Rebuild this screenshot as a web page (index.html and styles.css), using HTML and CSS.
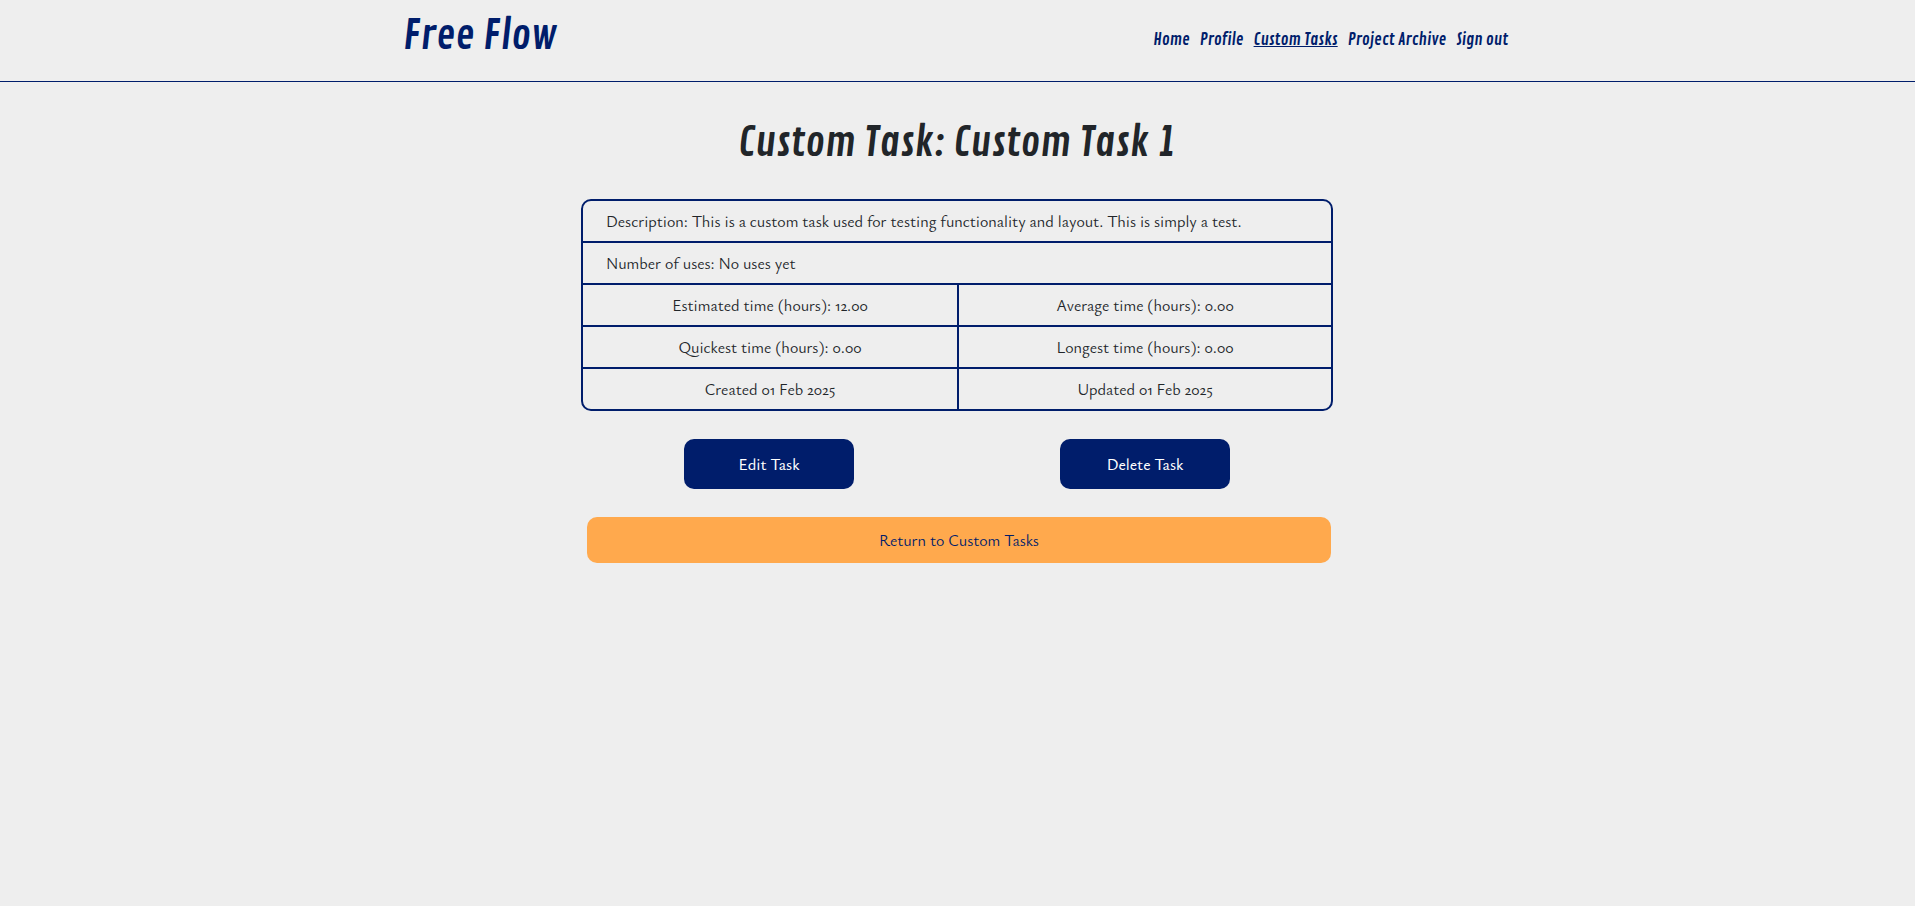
FILE: index.html
```html
<!DOCTYPE html>
<html lang="en">
<head>
<meta charset="utf-8">
<meta name="viewport" content="width=device-width, initial-scale=1">
<title>Free Flow</title>
<link rel="stylesheet" href="styles.css">
</head>
<body>
<header class="site-header">
  <div class="header-inner">
    <a class="brand" href="#">Free Flow</a>
    <nav class="main-nav">
      <a href="#">Home</a>
      <a href="#">Profile</a>
      <a class="active" href="#">Custom Tasks</a>
      <a href="#">Project Archive</a>
      <a href="#">Sign out</a>
    </nav>
  </div>
</header>
<main class="content">
  <h1 class="title">Custom Task: Custom Task 1</h1>
  <table class="details">
    <tbody>
      <tr><td class="wide" colspan="2">Description: This is a custom task used for testing functionality and layout. This is simply a test.</td></tr>
      <tr><td class="wide" colspan="2">Number of uses: No uses yet</td></tr>
      <tr><td>Estimated time (hours): 12.00</td><td>Average time (hours): 0.00</td></tr>
      <tr><td>Quickest time (hours): 0.00</td><td>Longest time (hours): 0.00</td></tr>
      <tr><td>Created 01 Feb 2025</td><td>Updated 01 Feb 2025</td></tr>
    </tbody>
  </table>
  <div class="actions">
    <button class="btn" type="button">Edit Task</button>
    <button class="btn" type="button">Delete Task</button>
  </div>
  <a class="return" href="#">Return to Custom Tasks</a>
</main>
</body>
</html>
```

FILE: styles.css
```css
* {
  box-sizing: border-box;
}

body {
  margin: 0;
  background: #eee;
  color: #212529;
  font: 16px/24px Ysabeau, Lato, sans-serif;
}

.site-header {
  border-bottom: 1px solid #001d6b;
}

.header-inner {
  display: flex;
  justify-content: space-between;
  max-width: 1109px;
  margin: 0 auto;
  padding: 12px 4px 21px 0;
}

.brand,
.main-nav,
.title {
  font-family: "Contrail One", Roboto, sans-serif;
  font-weight: 400;
}

.brand {
  color: #001d6b;
  font-size: 40px;
  line-height: 48px;
  text-decoration: none;
}

.main-nav {
  display: flex;
  gap: 10px;
  padding-top: 16px;
  font-size: 16px;
}

.main-nav a {
  color: #001d6b;
  text-decoration: none;
}

.main-nav .active {
  text-decoration: underline;
}

.content {
  max-width: 753px;
  margin: 0 auto;
  padding: 37px 1px 34px 0;
}

.title {
  margin: 0 0 32px;
  font-size: 40px;
  line-height: 48px;
  text-align: center;
}

.details {
  width: 100%;
  table-layout: fixed;
  border: 2px solid #001d6b;
  border-radius: 10px;
  border-spacing: 0;
}

.details td {
  height: 42px;
  padding: 8px 23px;
  border-bottom: 2px solid #001d6b;
  text-align: center;
}

.details td + td {
  border-left: 2px solid #001d6b;
}

.details .wide {
  text-align: left;
}

.details tr:last-child td {
  height: 40px;
  border-bottom: 0;
}

.actions {
  display: grid;
  grid-template-columns: 1fr 1fr;
  justify-items: center;
  padding: 28px 0;
}

.btn {
  width: 170px;
  height: 50px;
  border: 0;
  border-radius: 10px;
  background: #001d6b;
  color: #fff;
  font: inherit;
  font-weight: 500;
}

.return {
  display: block;
  margin: 0 2px 0 6px;
  padding: 11px;
  border-radius: 10px;
  background: #ffa94d;
  color: #001d6b;
  text-align: center;
  text-decoration: none;
}
```
